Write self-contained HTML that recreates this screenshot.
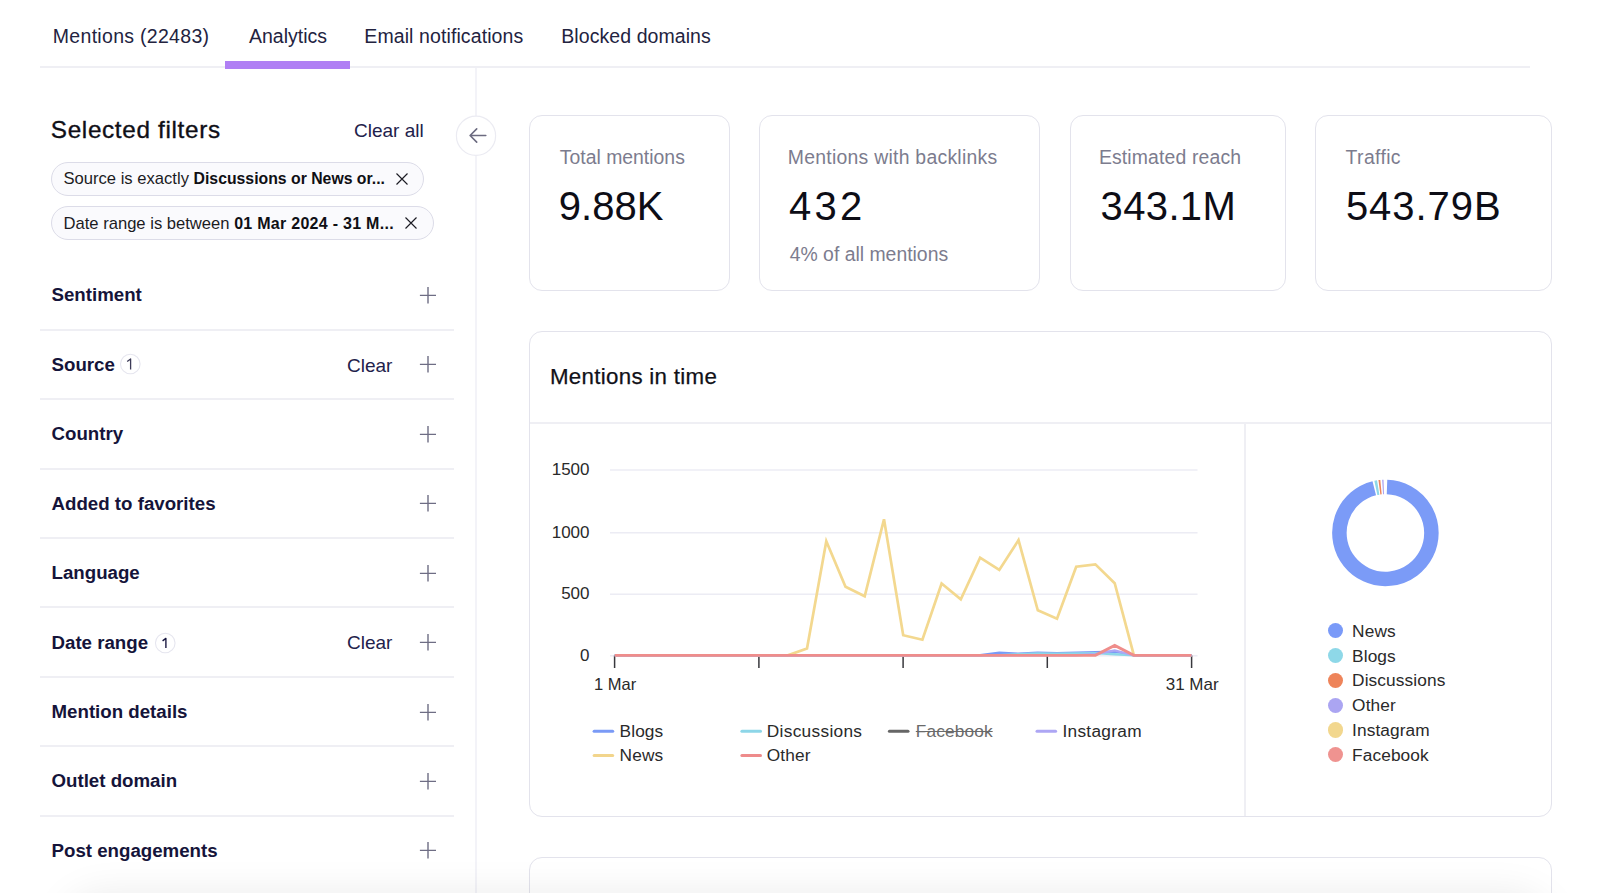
<!DOCTYPE html>
<html>
<head>
<meta charset="utf-8">
<style>
html,body{margin:0;padding:0;}
body{width:1600px;height:893px;overflow:hidden;position:relative;background:#ffffff;font-family:"Liberation Sans",sans-serif;}
.a{position:absolute;white-space:nowrap;line-height:1;}
.tab{font-size:19.5px;color:#23233f;}
.hl{position:absolute;background:#efeff4;}
.sec{font-size:18.7px;font-weight:700;color:#15143a;}
.clr{font-size:19px;color:#22214b;}
.plus{position:absolute;width:17px;height:17px;}
.plus:before{content:"";position:absolute;left:0.4px;top:8.25px;width:16.1px;height:1.35px;background:#6c6b82;}
.plus:after{content:"";position:absolute;left:7.85px;top:0.2px;width:1.35px;height:16.5px;background:#7a798e;}
.badge{position:absolute;width:18px;height:18px;border:1px solid #e4e4ee;border-radius:50%;font-size:13px;color:#33334d;text-align:center;line-height:18px;}
.card{position:absolute;top:115px;height:176px;border:1px solid #e3e3ec;border-radius:13px;background:#fff;box-sizing:border-box;}
.lbl{font-size:19.4px;color:#7c7c8e;}
.num{font-size:40px;color:#0d0d16;}
.chip{position:absolute;left:51px;height:33px;border:1.5px solid #dcdce8;border-radius:17px;background:#fafafd;box-sizing:border-box;}
.ct{font-size:16.6px;color:#1c1c1f;}
.ct b{font-size:15.8px;font-weight:700;color:#0f0f14;}
.ax{font-size:17px;color:#2a2a2a;}
.lg{font-size:17.3px;color:#2a2a2a;letter-spacing:0.1px;}
</style>
</head>
<body>
<!-- tabs -->
<div class="a tab" style="left:52.8px;top:26.5px;letter-spacing:0.3px;">Mentions (22483)</div>
<div class="a tab" style="left:249px;top:26.5px;">Analytics</div>
<div class="a tab" style="left:364.3px;top:26.5px;letter-spacing:0.1px;">Email notifications</div>
<div class="a tab" style="left:561.3px;top:26.5px;letter-spacing:0.07px;">Blocked domains</div>
<div class="hl" style="left:40px;top:66px;width:1490px;height:2px;"></div>
<div style="position:absolute;left:225px;top:61px;width:125px;height:8px;background:#b07ff4;"></div>

<!-- sidebar divider -->
<div class="hl" style="left:475px;top:68px;width:2px;height:825px;background:#f3f3f8;"></div>

<!-- selected filters -->
<div class="a" style="left:50.8px;top:118.1px;font-size:24.3px;color:#0f0f17;letter-spacing:0.66px;-webkit-text-stroke:0.35px #0f0f17;">Selected filters</div>
<div class="a clr" style="left:354px;top:120.6px;">Clear all</div>

<!-- collapse button -->
<svg style="position:absolute;left:450px;top:110px;" width="52" height="52" viewBox="0 0 52 52"><circle cx="26" cy="25.7" r="19.6" fill="#fff" stroke="#ebebf2" stroke-width="1.2"/></svg>
<svg style="position:absolute;left:466px;top:125px;" width="22" height="22" viewBox="0 0 22 22"><path d="M19.8 10.5 H4.4 M10.7 3.9 L4.1 10.5 L10.7 17.1" fill="none" stroke="#6c6b80" stroke-width="1.6" stroke-linecap="round" stroke-linejoin="round"/></svg>

<!-- chips -->
<div class="chip" style="top:162px;width:373px;height:34px;"></div>
<div class="a ct" style="left:63.5px;top:171.4px;">Source is exactly <b>Discussions or News or...</b></div>
<svg style="position:absolute;left:395px;top:171.6px;" width="14" height="14" viewBox="0 0 14 14"><path d="M1.5 1.5 L12.5 12.5 M12.5 1.5 L1.5 12.5" stroke="#1c1c24" stroke-width="1.15"/></svg>
<div class="chip" style="top:206.3px;width:383px;height:34px;"></div>
<div class="a ct" style="left:63.5px;top:215.9px;">Date range is between <b style="font-size:16px;letter-spacing:0.28px;">01 Mar 2024 - 31 M...</b></div>
<svg style="position:absolute;left:404.3px;top:216.2px;" width="14" height="14" viewBox="0 0 14 14"><path d="M1.5 1.5 L12.5 12.5 M12.5 1.5 L1.5 12.5" stroke="#1c1c24" stroke-width="1.15"/></svg>

<!-- sections -->
<div class="a sec" style="left:51.5px;top:286.4px;">Sentiment</div>
<svg style="position:absolute;left:410px;top:280.0px;" width="40" height="30" viewBox="0 0 40 30"><path d="M9.9 15.4 H26 M18 7 V23.5" stroke="#6e6d84" stroke-width="1.4" fill="none"/></svg>
<div class="a sec" style="left:51.5px;top:355.8px;">Source</div>
<svg style="position:absolute;left:410px;top:349.4px;" width="40" height="30" viewBox="0 0 40 30"><path d="M9.9 15.4 H26 M18 7 V23.5" stroke="#6e6d84" stroke-width="1.4" fill="none"/></svg>
<div class="a clr" style="left:347px;top:355.6px;">Clear</div>
<svg style="position:absolute;left:115px;top:348.9px;" width="30" height="30" viewBox="0 0 30 30"><circle cx="15.3" cy="15" r="9.8" fill="#fff" stroke="#e6e6ef" stroke-width="1.1"/><path d="M12.2 12.4 L15.6 9.9 V20.4" fill="none" stroke="#3c3b57" stroke-width="1.3" stroke-linejoin="round"/></svg>
<div class="a sec" style="left:51.5px;top:425.2px;">Country</div>
<svg style="position:absolute;left:410px;top:418.8px;" width="40" height="30" viewBox="0 0 40 30"><path d="M9.9 15.4 H26 M18 7 V23.5" stroke="#6e6d84" stroke-width="1.4" fill="none"/></svg>
<div class="a sec" style="left:51.5px;top:494.7px;">Added to favorites</div>
<svg style="position:absolute;left:410px;top:488.3px;" width="40" height="30" viewBox="0 0 40 30"><path d="M9.9 15.4 H26 M18 7 V23.5" stroke="#6e6d84" stroke-width="1.4" fill="none"/></svg>
<div class="a sec" style="left:51.5px;top:564.1px;">Language</div>
<svg style="position:absolute;left:410px;top:557.7px;" width="40" height="30" viewBox="0 0 40 30"><path d="M9.9 15.4 H26 M18 7 V23.5" stroke="#6e6d84" stroke-width="1.4" fill="none"/></svg>
<div class="a sec" style="left:51.5px;top:633.5px;">Date range</div>
<svg style="position:absolute;left:410px;top:627.1px;" width="40" height="30" viewBox="0 0 40 30"><path d="M9.9 15.4 H26 M18 7 V23.5" stroke="#6e6d84" stroke-width="1.4" fill="none"/></svg>
<div class="a clr" style="left:347px;top:633.3px;">Clear</div>
<svg style="position:absolute;left:149.5px;top:628.1px;" width="30" height="30" viewBox="0 0 30 30"><circle cx="15.25" cy="15" r="9.8" fill="#fff" stroke="#e6e6ef" stroke-width="1.1"/><path d="M12.6 12.9 L15.9 10.4 V20.1" fill="none" stroke="#14133d" stroke-width="1.35" stroke-linejoin="round"/></svg>
<div class="a sec" style="left:51.5px;top:702.9px;">Mention details</div>
<svg style="position:absolute;left:410px;top:696.5px;" width="40" height="30" viewBox="0 0 40 30"><path d="M9.9 15.4 H26 M18 7 V23.5" stroke="#6e6d84" stroke-width="1.4" fill="none"/></svg>
<div class="a sec" style="left:51.5px;top:772.3px;">Outlet domain</div>
<svg style="position:absolute;left:410px;top:765.9px;" width="40" height="30" viewBox="0 0 40 30"><path d="M9.9 15.4 H26 M18 7 V23.5" stroke="#6e6d84" stroke-width="1.4" fill="none"/></svg>
<div class="a sec" style="left:51.5px;top:841.8px;">Post engagements</div>
<svg style="position:absolute;left:410px;top:835.4px;" width="40" height="30" viewBox="0 0 40 30"><path d="M9.9 15.4 H26 M18 7 V23.5" stroke="#6e6d84" stroke-width="1.4" fill="none"/></svg>
<div class="hl" style="left:40px;top:328.7px;width:414px;height:2px;"></div>
<div class="hl" style="left:40px;top:398.1px;width:414px;height:2px;"></div>
<div class="hl" style="left:40px;top:467.5px;width:414px;height:2px;"></div>
<div class="hl" style="left:40px;top:537.0px;width:414px;height:2px;"></div>
<div class="hl" style="left:40px;top:606.4px;width:414px;height:2px;"></div>
<div class="hl" style="left:40px;top:675.8px;width:414px;height:2px;"></div>
<div class="hl" style="left:40px;top:745.2px;width:414px;height:2px;"></div>
<div class="hl" style="left:40px;top:814.6px;width:414px;height:2px;"></div>

<!-- cards -->
<div class="card" style="left:529px;width:201px;height:176px;"></div>
<div class="a lbl" style="left:559.8px;top:147.8px;">Total mentions</div>
<div class="a num" style="left:558.8px;top:186.4px;">9.88K</div>
<div class="card" style="left:759px;width:281px;height:176px;"></div>
<div class="a lbl" style="left:787.8px;top:147.8px;letter-spacing:0.26px;">Mentions with backlinks</div>
<div class="a num" style="left:789px;top:186.4px;letter-spacing:3.3px;">432</div>
<div class="a lbl" style="left:789.7px;top:245.3px;">4% of all mentions</div>
<div class="card" style="left:1070px;width:216px;height:176px;"></div>
<div class="a lbl" style="left:1098.9px;top:147.8px;letter-spacing:0.15px;">Estimated reach</div>
<div class="a num" style="left:1100.6px;top:186.4px;letter-spacing:0.35px;">343.1M</div>
<div class="card" style="left:1315px;width:237px;height:176px;"></div>
<div class="a lbl" style="left:1345.6px;top:147.8px;letter-spacing:0.35px;">Traffic</div>
<div class="a num" style="left:1345.9px;top:186.4px;letter-spacing:0.95px;">543.79B</div>

<!-- chart panel -->
<div class="card" style="left:529px;top:331px;width:1023px;height:486px;background:#fff;"></div>
<div class="hl" style="left:530px;top:421.5px;width:1021px;height:2px;"></div>
<div class="hl" style="left:1244.3px;top:423px;width:2px;height:393px;"></div>
<div class="a" style="left:550px;top:365.5px;font-size:22.3px;letter-spacing:0.3px;color:#111118;-webkit-text-stroke:0.25px #111118;">Mentions in time</div>
<div class="a ax" style="right:1010.5px;top:646.8px;">0</div>
<div class="a ax" style="right:1010.5px;top:585.3px;">500</div>
<div class="a ax" style="right:1010.5px;top:523.8px;">1000</div>
<div class="a ax" style="right:1010.5px;top:461.1px;">1500</div>
<div class="a ax" style="left:594.0px;top:675.8px;font-size:16.5px;">1 Mar</div>
<div class="a ax" style="left:1165.7px;top:675.8px;">31 Mar</div>
<svg style="position:absolute;left:0;top:0;" width="1600" height="893" viewBox="0 0 1600 893">
<line x1="610" y1="655.8" x2="1197.5" y2="655.8" stroke="#ececf4" stroke-width="1.5"/>
<line x1="610" y1="594.3" x2="1197.5" y2="594.3" stroke="#ececf4" stroke-width="1.5"/>
<line x1="610" y1="532.8" x2="1197.5" y2="532.8" stroke="#ececf4" stroke-width="1.5"/>
<line x1="610" y1="470.1" x2="1197.5" y2="470.1" stroke="#ececf4" stroke-width="1.5"/>
<line x1="614.6" y1="655.5" x2="614.6" y2="668" stroke="#38383d" stroke-width="1.5"/>
<line x1="758.9" y1="655.5" x2="758.9" y2="668" stroke="#38383d" stroke-width="1.5"/>
<line x1="903.1" y1="655.5" x2="903.1" y2="668" stroke="#38383d" stroke-width="1.5"/>
<line x1="1047.3" y1="655.5" x2="1047.3" y2="668" stroke="#38383d" stroke-width="1.5"/>
<line x1="1191.6" y1="655.5" x2="1191.6" y2="668" stroke="#38383d" stroke-width="1.5"/>
<polyline points="614.8,655.3 634.0,655.3 653.2,655.3 672.5,655.3 691.7,655.3 710.9,655.3 730.1,655.3 749.4,655.3 768.6,655.3 787.8,655.3 807.0,648.5 826.3,541.2 845.5,586.8 864.7,596.3 884.0,519.3 903.2,635.2 922.4,639.7 941.6,583.5 960.8,599.3 980.1,557.7 999.3,570.0 1018.5,540.1 1037.8,610.3 1057.0,618.8 1076.2,566.7 1095.4,564.3 1114.7,583.2 1133.9,655.3 1153.1,655.3 1172.3,655.3 1191.5,655.3" fill="none" stroke="#f3d88f" stroke-width="2.7"/>
<polyline points="614.8,655.3 634.0,655.3 653.2,655.3 672.5,655.3 691.7,655.3 710.9,655.3 730.1,655.3 749.4,655.3 768.6,655.3 787.8,655.3 807.0,655.3 826.3,655.3 845.5,655.3 864.7,655.3 884.0,655.3 903.2,655.3 922.4,655.3 941.6,655.3 960.8,655.3 980.1,655.3 999.3,652.8 1018.5,653.8 1037.8,652.6 1057.0,653.1 1076.2,652.8 1095.4,652.2 1114.7,651.6 1133.9,655.3 1153.1,655.3 1172.3,655.3 1191.5,655.3" fill="none" stroke="#7a9af6" stroke-width="2.4"/>
<polyline points="614.8,655.3 634.0,655.3 653.2,655.3 672.5,655.3 691.7,655.3 710.9,655.3 730.1,655.3 749.4,655.3 768.6,655.3 787.8,655.3 807.0,655.3 826.3,655.3 845.5,655.3 864.7,655.3 884.0,655.3 903.2,655.3 922.4,655.3 941.6,655.3 960.8,655.3 980.1,655.3 999.3,655.3 1018.5,654.1 1037.8,653.4 1057.0,653.8 1076.2,653.4 1095.4,653.1 1114.7,654.3 1133.9,655.3 1153.1,655.3 1172.3,655.3 1191.5,655.3" fill="none" stroke="#8dd6e8" stroke-width="2.4"/>
<polyline points="614.8,655.3 634.0,655.3 653.2,655.3 672.5,655.3 691.7,655.3 710.9,655.3 730.1,655.3 749.4,655.3 768.6,655.3 787.8,655.3 807.0,655.3 826.3,655.3 845.5,655.3 864.7,655.3 884.0,655.3 903.2,655.3 922.4,655.3 941.6,655.3 960.8,655.3 980.1,655.3 999.3,655.3 1018.5,655.3 1037.8,655.3 1057.0,655.3 1076.2,655.3 1095.4,654.1 1114.7,650.4 1133.9,655.3 1153.1,655.3 1172.3,655.3 1191.5,655.3" fill="none" stroke="#ada6f4" stroke-width="2.4"/>
<polyline points="614.8,655.3 634.0,655.3 653.2,655.3 672.5,655.3 691.7,655.3 710.9,655.3 730.1,655.3 749.4,655.3 768.6,655.3 787.8,655.3 807.0,655.3 826.3,655.3 845.5,655.3 864.7,655.3 884.0,655.3 903.2,655.3 922.4,655.3 941.6,655.3 960.8,655.3 980.1,655.3 999.3,655.3 1018.5,655.3 1037.8,655.3 1057.0,655.3 1076.2,655.3 1095.4,655.3 1114.7,645.4 1133.9,655.3 1153.1,655.3 1172.3,655.3 1191.5,655.3" fill="none" stroke="#ef8d8b" stroke-width="2.8"/>
<line x1="594.1" y1="731.2" x2="612.7" y2="731.2" stroke="#7a9af6" stroke-width="3" stroke-linecap="round"/>
<line x1="741.9" y1="731.2" x2="760.5" y2="731.2" stroke="#8dd6e8" stroke-width="3" stroke-linecap="round"/>
<line x1="889.4" y1="731.2" x2="908.0" y2="731.2" stroke="#666666" stroke-width="3" stroke-linecap="round"/>
<line x1="1037.0" y1="731.2" x2="1055.6" y2="731.2" stroke="#ada6f4" stroke-width="3" stroke-linecap="round"/>
<line x1="594.1" y1="755.6" x2="612.7" y2="755.6" stroke="#f2d58c" stroke-width="3" stroke-linecap="round"/>
<line x1="741.9" y1="755.6" x2="760.5" y2="755.6" stroke="#ee8b8b" stroke-width="3" stroke-linecap="round"/>
<path d="M1387.01 486.93 A46 46 0 1 1 1374.27 488.27" fill="none" stroke="#7b9bf7" stroke-width="14.5"/>
<path d="M1375.84 487.91 A46 46 0 0 1 1378.20 487.47" fill="none" stroke="#8ed8e8" stroke-width="14.5"/>
<path d="M1379.40 487.29 A46 46 0 0 1 1380.99 487.11" fill="none" stroke="#ee845a" stroke-width="14.5"/>
<path d="M1382.59 486.99 A46 46 0 0 1 1383.79 486.93" fill="none" stroke="#aba5f2" stroke-width="14.5"/>
</svg>
<div class="a lg" style="left:619.6px;top:722.6px;">Blogs</div>
<div class="a lg" style="left:766.8px;top:722.6px;letter-spacing:0.3px;">Discussions</div>
<div class="a lg" style="left:915.8px;top:722.6px;letter-spacing:0.12px;text-decoration:line-through;color:#6a6a6a;">Facebook</div>
<div class="a lg" style="left:1062.4px;top:722.6px;letter-spacing:0.3px;">Instagram</div>
<div class="a lg" style="left:619.6px;top:746.8px;">News</div>
<div class="a lg" style="left:766.8px;top:746.8px;">Other</div>
<div style="position:absolute;left:1327.5px;top:622.8px;width:15.2px;height:15.2px;border-radius:50%;background:#7a9af8;"></div>
<div class="a lg" style="left:1352.1px;top:622.6px;">News</div>
<div style="position:absolute;left:1327.5px;top:647.7px;width:15.2px;height:15.2px;border-radius:50%;background:#8ed8e8;"></div>
<div class="a lg" style="left:1352.1px;top:647.5px;">Blogs</div>
<div style="position:absolute;left:1327.5px;top:672.6px;width:15.2px;height:15.2px;border-radius:50%;background:#ee845a;"></div>
<div class="a lg" style="left:1352.1px;top:672.4px;">Discussions</div>
<div style="position:absolute;left:1327.5px;top:697.5px;width:15.2px;height:15.2px;border-radius:50%;background:#aba5f2;"></div>
<div class="a lg" style="left:1352.1px;top:697.3px;">Other</div>
<div style="position:absolute;left:1327.5px;top:722.4px;width:15.2px;height:15.2px;border-radius:50%;background:#f2d78e;"></div>
<div class="a lg" style="left:1352.1px;top:722.2px;">Instagram</div>
<div style="position:absolute;left:1327.5px;top:746.8px;width:15.2px;height:15.2px;border-radius:50%;background:#ef9390;"></div>
<div class="a lg" style="left:1352.1px;top:747.1px;">Facebook</div>
<div class="card" style="left:529px;top:857px;width:1023px;height:100px;background:#fff;"></div>

<!-- bottom shade -->
<div style="position:absolute;left:72px;top:903px;width:1470px;height:60px;border-radius:30px;background:#eee;box-shadow:0 0 40px 8px rgba(0,0,0,0.085);"></div>
</body>
</html>
